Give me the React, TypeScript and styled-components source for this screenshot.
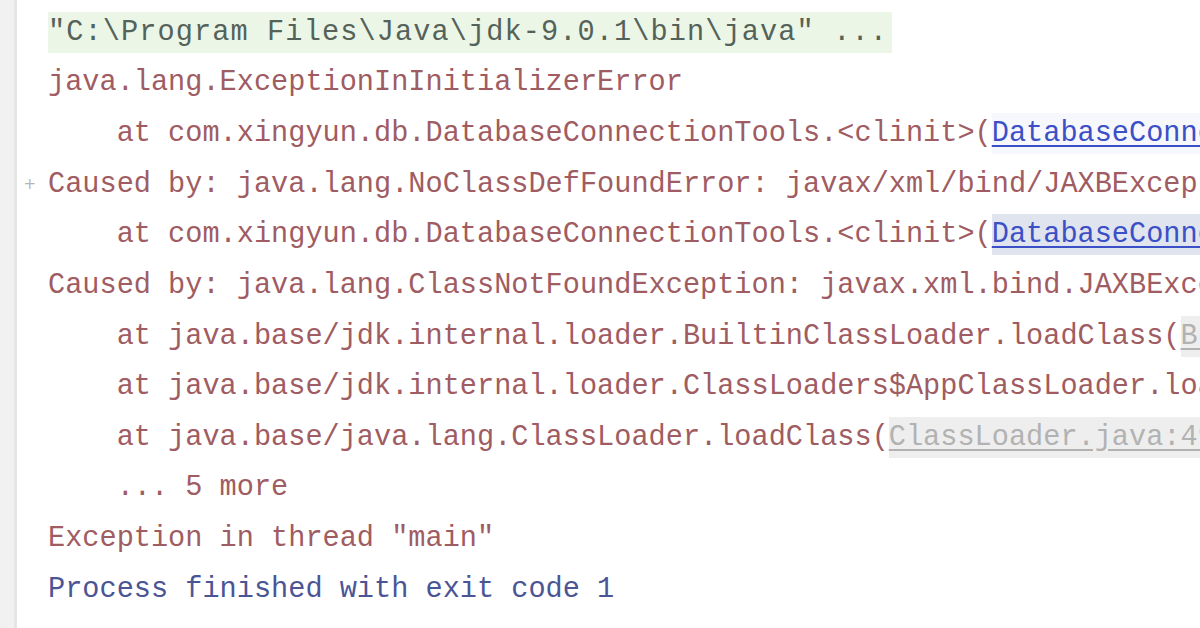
import React from "react";
import styled, { createGlobalStyle } from "styled-components";

const Global = createGlobalStyle`
  html, body { margin: 0; padding: 0; background: #ffffff; }
  body { width: 1200px; height: 628px; overflow: hidden; }
`;

const Console = styled.div`
  display: flex;
  width: 1200px;
  height: 628px;
  overflow: hidden;
  background: #ffffff;
`;

const Gutter = styled.div`
  flex: 0 0 14px;
  background: #f1f1f1;
  border-right: 3px solid #e6e6e6;
`;

const Fold = styled.div`
  flex: 0 0 31px;
  display: flex;
  flex-direction: column;
  padding-top: 7px;
`;

const FoldCell = styled.div`
  height: 50.64px;
  display: flex;
  align-items: center;
  justify-content: flex-end;
  padding-right: 12px;
  color: #b4b4b4;
  font-family: "DejaVu Sans", sans-serif;
  font-size: 15px;
`;

const Lines = styled.div`
  flex: 1;
  display: flex;
  flex-direction: column;
  padding-top: 7px;
  min-width: 0;
`;

type Tone = "cmd" | "err" | "info";

const toneColor: Record<Tone, string> = {
  cmd: "#55625a",
  err: "#9f5c62",
  info: "#4b5595",
};

const Row = styled.div<{ $tone: Tone }>`
  height: 50.64px;
  display: flex;
  align-items: center;
  white-space: pre;
  font-family: "Liberation Mono", monospace;
  font-size: 28.6px;
  letter-spacing: ${(p) => (p.$tone === "cmd" ? "1.1px" : "0")};
  color: ${(p) => toneColor[p.$tone]};
`;

const Text = styled.span<{ $bg?: string }>`
  display: inline-block;
  line-height: 41px;
  padding-right: ${(p) => (p.$bg ? "4px" : "0")};
  background: ${(p) => p.$bg || "transparent"};
`;

type LinkKind = "blue" | "blueSel" | "gray";

const Link = styled.span<{ $kind: LinkKind }>`
  display: inline-block;
  line-height: 41px;
  text-decoration: underline;
  text-underline-offset: 4px;
  color: ${(p) => (p.$kind === "gray" ? "#b2b2b2" : "#3b4fc6")};
  background: ${(p) =>
    p.$kind === "blueSel" ? "#dfe4ef" : p.$kind === "gray" ? "#eeeeee" : "#f7f8fd"};
`;

export default function App() {
  return (
    <>
      <Global />
      <Console>
        <Gutter />
        <Fold>
          <FoldCell />
          <FoldCell />
          <FoldCell />
          <FoldCell>+</FoldCell>
        </Fold>
        <Lines>
          <Row $tone="cmd">
            <Text $bg="#ebf6e7">{'"C:\\Program Files\\Java\\jdk-9.0.1\\bin\\java" ...'}</Text>
          </Row>
          <Row $tone="err">
            <Text>java.lang.ExceptionInInitializerError</Text>
          </Row>
          <Row $tone="err">
            <Text>{"    at com.xingyun.db.DatabaseConnectionTools.<clinit>("}</Text>
            <Link $kind="blue">DatabaseConnectionTools.java:11</Link>
            <Text>)</Text>
          </Row>
          <Row $tone="err">
            <Text>Caused by: java.lang.NoClassDefFoundError: javax/xml/bind/JAXBException</Text>
          </Row>
          <Row $tone="err">
            <Text>{"    at com.xingyun.db.DatabaseConnectionTools.<clinit>("}</Text>
            <Link $kind="blueSel">DatabaseConnectionTools.java:11</Link>
            <Text>)</Text>
          </Row>
          <Row $tone="err">
            <Text>Caused by: java.lang.ClassNotFoundException: javax.xml.bind.JAXBException</Text>
          </Row>
          <Row $tone="err">
            <Text>{"    at java.base/jdk.internal.loader.BuiltinClassLoader.loadClass("}</Text>
            <Link $kind="gray">BuiltinClassLoader.java:582</Link>
            <Text>)</Text>
          </Row>
          <Row $tone="err">
            <Text>{"    at java.base/jdk.internal.loader.ClassLoaders$AppClassLoader.loadClass("}</Text>
            <Link $kind="gray">ClassLoaders.java:185</Link>
            <Text>)</Text>
          </Row>
          <Row $tone="err">
            <Text>{"    at java.base/java.lang.ClassLoader.loadClass("}</Text>
            <Link $kind="gray">ClassLoader.java:496</Link>
            <Text>)</Text>
          </Row>
          <Row $tone="err">
            <Text>{"    ... 5 more"}</Text>
          </Row>
          <Row $tone="err">
            <Text>{'Exception in thread "main"'}</Text>
          </Row>
          <Row $tone="info">
            <Text>Process finished with exit code 1</Text>
          </Row>
        </Lines>
      </Console>
    </>
  );
}
